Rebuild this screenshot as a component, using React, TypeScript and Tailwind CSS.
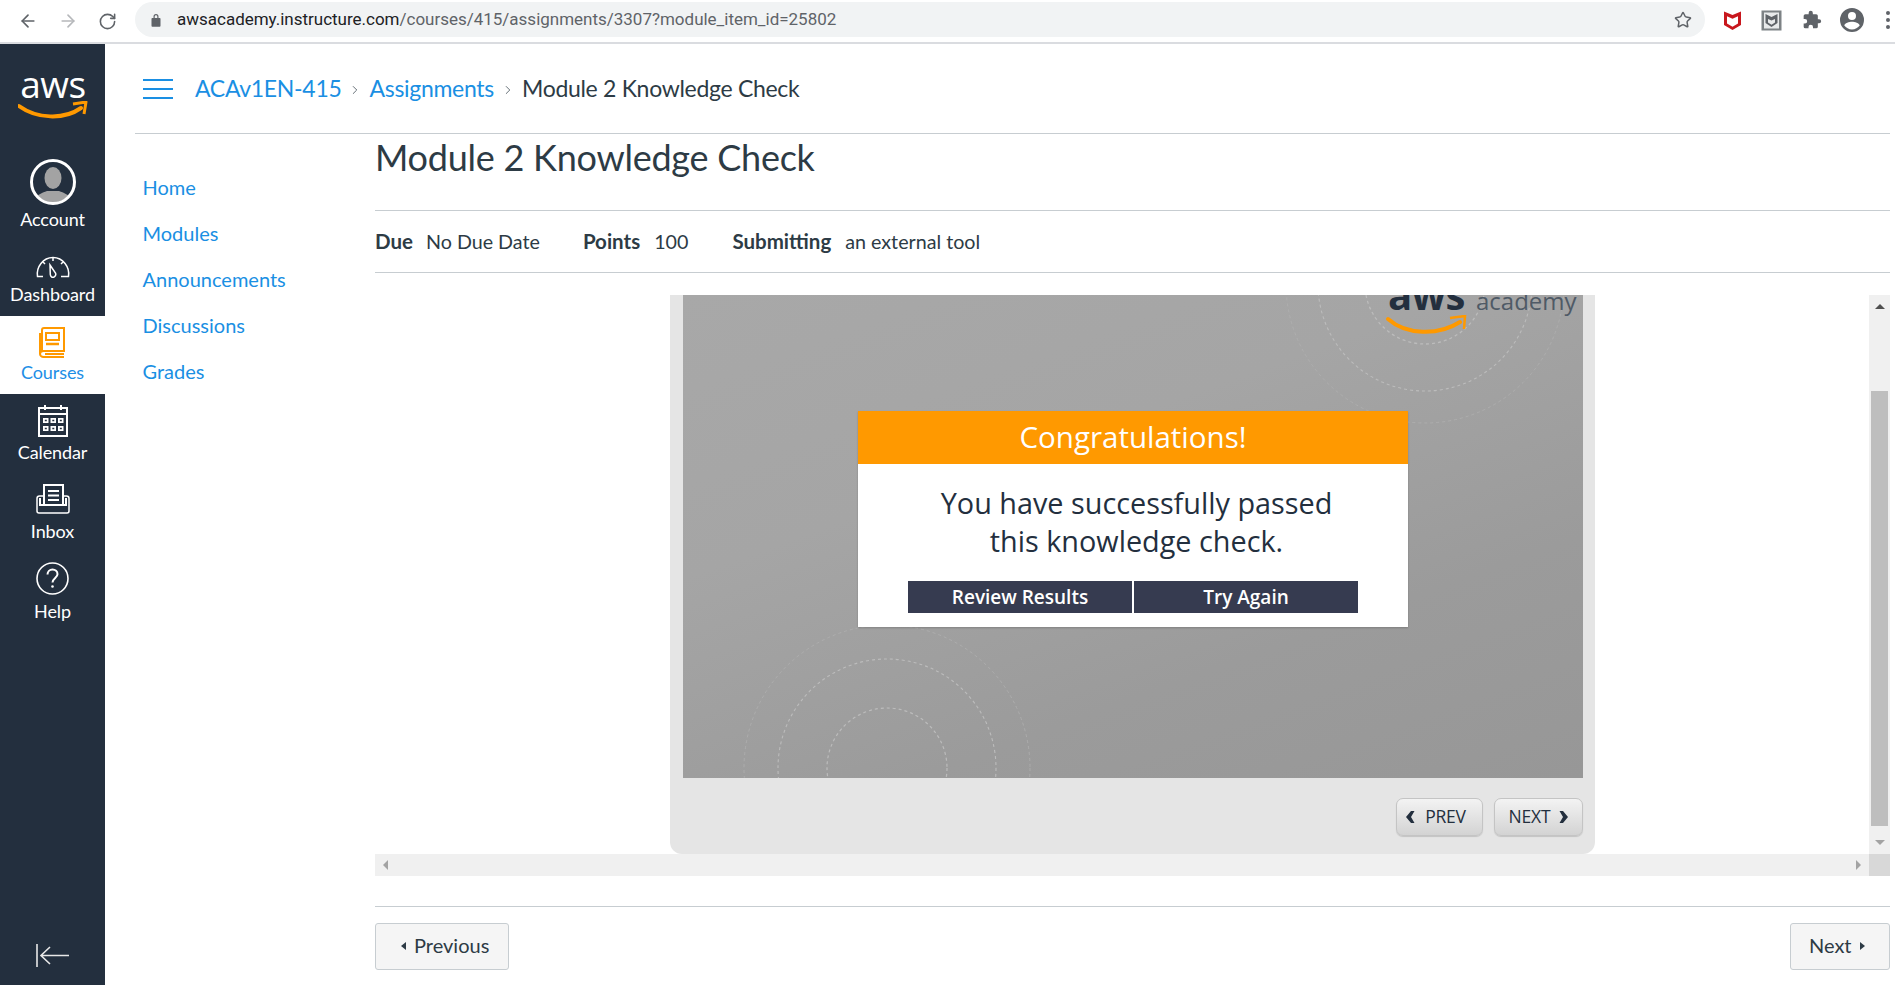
import { ArrowLeft, ArrowRight, RotateCw, Star, ChevronRight } from 'lucide-react'
import type { ReactNode } from 'react'

const courseLinks = ['Home', 'Modules', 'Announcements', 'Discussions', 'Grades']

function ChromeBar() {
  return (
    <div className="flex h-[44px] shrink-0 items-start border-b-2 border-[#dadce0] bg-white pl-[18px] [font-family:Roboto,sans-serif]">
      <div className="flex h-[42px] items-center gap-[20px] text-[#5f6368]">
        <ArrowLeft size={20} strokeWidth={2} />
        <ArrowRight size={20} strokeWidth={2} className="text-[#b6b8bb]" />
        <RotateCw size={19} strokeWidth={2} />
      </div>
      <div className="ml-[18px] mt-[2px] flex h-[35px] w-[1570px] items-center rounded-full bg-[#f1f3f4] pl-[16px] pr-[13px]">
        <svg width="10" height="14" viewBox="0 0 10 14" className="fill-[#5f6368]">
          <path d="M2.5 5V3.6a2.5 2.5 0 0 1 5 0V5h1.2c.5 0 .8.4.8.8v7c0 .6-.3.9-.8.9H1.3c-.5 0-.8-.3-.8-.9v-7c0-.4.3-.8.8-.8zm1.2 0h2.6V3.6a1.3 1.3 0 0 0-2.6 0z" />
        </svg>
        <span className="ml-[16px] text-[17px] tracking-[-0.01px] text-[#202124]">
          awsacademy.instructure.com<span className="text-[#5f6368]">/courses/415/assignments/3307?module_item_id=25802</span>
        </span>
        <Star size={18} strokeWidth={2} className="ml-auto text-[#5f6368]" />
      </div>
      <div className="ml-[19px] flex h-[40px] items-center">
        <svg width="17" height="20" viewBox="0 0 17 20" className="fill-[#c8171d]">
          <path d="M0 1.5 8.5 5 17 1.5V15l-8.5 5L0 15zm3 4.8v7.2l5.5 3.2 5.5-3.2V6.3L8.5 8.7z" />
        </svg>
        <svg width="21" height="21" viewBox="0 0 21 21" className="ml-[20px]">
          <rect x="0.5" y="0.5" width="20" height="20" fill="#7d8285" />
          <rect x="3" y="2.5" width="15" height="16" fill="#e8eaeb" />
          <path d="M4.5 4 10.5 7l6-3v9l-6 4-6-4z" fill="#5f6368" />
          <path d="M7 9l3.5 1.5L14 9v3.5l-3.5 2.3L7 12.5z" fill="#e8eaeb" />
        </svg>
        <svg width="20" height="20" viewBox="0 0 24 24" className="ml-[20px] fill-[#5f6368]">
          <path d="M20.5 11H19V7a2 2 0 0 0-2-2h-4V3.5a2.5 2.5 0 0 0-5 0V5H4a2 2 0 0 0-2 2v3.8h1.5a2.7 2.7 0 0 1 0 5.4H2V20a2 2 0 0 0 2 2h3.8v-1.5a2.7 2.7 0 0 1 5.4 0V22H17a2 2 0 0 0 2-2v-4h1.5a2.5 2.5 0 0 0 0-5z" />
        </svg>
        <svg width="24" height="24" viewBox="0 0 24 24" className="ml-[18px] fill-[#5f6368]">
          <path d="M12 0a12 12 0 1 0 0 24 12 12 0 0 0 0-24zm0 4a4 4 0 1 1 0 8 4 4 0 0 1 0-8zm0 17.5c-3.2 0-6-1.5-7.7-3.9.1-2.5 5.1-3.9 7.7-3.9s7.6 1.4 7.7 3.9c-1.7 2.4-4.5 3.9-7.7 3.9z" />
        </svg>
        <div className="ml-[22px] flex flex-col gap-[3px]">
          <span className="h-[4px] w-[4px] rounded-full bg-[#5f6368]" />
          <span className="h-[4px] w-[4px] rounded-full bg-[#5f6368]" />
          <span className="h-[4px] w-[4px] rounded-full bg-[#5f6368]" />
        </div>
      </div>
    </div>
  )
}

function NavItem({ label, icon, active, className }: { label: string; icon: ReactNode; active?: boolean; className: string }) {
  return (
    <div className={`flex flex-col items-center ${active ? 'bg-white text-[#1d8ee6]' : 'text-white'} ${className}`}>
      {icon}
      <span className="text-[18px] leading-[20px] tracking-[-0.1px]">{label}</span>
    </div>
  )
}

function Sidebar() {
  return (
    <aside className="flex w-[105px] shrink-0 flex-col bg-[#232f3e] [font-family:Lato,sans-serif]">
      <div className="flex h-[106px] flex-col items-center pl-[1px] pt-[21px]">
        <span className="text-[37px] font-medium leading-[38px] tracking-[-0.4px] text-white [font-family:'Open_Sans',sans-serif]">aws</span>
        <svg width="70" height="20" viewBox="0 0 70 20" className="-mt-[2px]">
          <path d="M1 5c18 13 45 14 62 2" fill="none" stroke="#ff9900" strokeWidth="4" strokeLinecap="round" />
          <path d="M55 3l13-2-2 12" fill="none" stroke="#ff9900" strokeWidth="3" strokeLinejoin="round" />
        </svg>
      </div>
      <NavItem
        label="Account"
        className="h-[95px] pt-[9px]"
        icon={
          <svg width="46" height="46" viewBox="0 0 46 46" className="mb-[4px]">
            <defs>
              <clipPath id="avatar-clip"><circle cx="23" cy="23" r="20.5" /></clipPath>
            </defs>
            <g clipPath="url(#avatar-clip)" fill="#a3a3a3">
              <ellipse cx="23" cy="19" rx="8.5" ry="11" />
              <path d="M2 46c0-9 10-12 15-14h12c5 2 15 5 15 14z" />
            </g>
            <circle cx="23" cy="23" r="21.5" fill="none" stroke="#fff" strokeWidth="3" />
          </svg>
        }
      />
      <NavItem
        label="Dashboard"
        className="h-[71px] pt-[11px]"
        icon={
          <svg width="36" height="22" viewBox="0 0 36 22" fill="none" stroke="#fff" strokeWidth="1.5" className="mb-[6px]">
            <path d="M8 20.5H2.5C1 11 8 1.5 18 1.5S35 11 33.5 20.5H26" />
            <path d="M18 2v3M8 6l2 2M28 6l-2 2" />
            <path d="M15 9l5.5 8a3 3 0 0 1-1.5 4c-2 .8-3.5-.5-3.7-2.5z" />
          </svg>
        }
      />
      <NavItem
        label="Courses"
        active
        className="h-[78px] pt-[11px]"
        icon={
          <svg width="27" height="31" viewBox="0 0 27 31" fill="none" stroke="#ff9900" strokeWidth="2" className="mb-[4px]">
            <path d="M3 24V3c0-1 .8-2 2-2h20v23H4.5C2.5 24 1 25.5 1 27s1.5 3 3.5 3H25" />
            <path d="M1 27V6" />
            <rect x="7" y="6" width="13" height="7" />
            <path d="M7 17h13" strokeWidth="2.5" />
            <path d="M6 27h19" />
          </svg>
        }
      />
      <NavItem
        label="Calendar"
        className="h-[78px] pt-[10px]"
        icon={
          <svg width="30" height="33" viewBox="0 0 30 33" fill="none" stroke="#fff" strokeWidth="2" className="mb-[5px]">
            <rect x="1" y="4" width="28" height="28" />
            <path d="M1 10h28M7 1v5M23 1v5" />
            <g fill="#fff" stroke="none">
              <path d="M5 14h5.5v5H5zM12.5 14H18v5h-5.5zM20 14h5.5v5H20zM5 22h5.5v5H5zM12.5 22H18v5h-5.5zM20 22h5.5v5H20z" />
            </g>
            <g fill="#232f3e" stroke="none">
              <path d="M6.8 15.8h2v1.5h-2zM14.3 15.8h2v1.5h-2zM21.8 15.8h2v1.5h-2zM6.8 23.8h2v1.5h-2zM14.3 23.8h2v1.5h-2zM21.8 23.8h2v1.5h-2z" />
            </g>
          </svg>
        }
      />
      <NavItem
        label="Inbox"
        className="h-[79px] pt-[12px]"
        icon={
          <svg width="34" height="30" viewBox="0 0 34 30" fill="none" stroke="#fff" strokeWidth="1.5" className="mb-[7px]">
            <path d="M8 20V1h19v19" strokeWidth="2" />
            <path d="M12 7h11M12 11.5h11M12 16h11" strokeWidth="2" />
            <path d="M8 12H3.5C2 12 1 13 1 14.5V27c0 1 1 2 2 2h28c1 0 2-1 2-2V14.5c0-1.5-1-2.5-2.5-2.5H27" />
            <path d="M4 14v7h26v-7" strokeWidth="2" />
          </svg>
        }
      />
      <NavItem
        label="Help"
        className="h-[79px] pt-[11px]"
        icon={
          <svg width="33" height="33" viewBox="0 0 33 33" fill="none" stroke="#fff" strokeWidth="1.6" className="mb-[6px]">
            <circle cx="16.5" cy="16.5" r="15.5" />
            <path d="M11.5 12.5c0-3 2.2-5 5-5s5 2 5 4.7c0 3.5-5 4-5 8.3" strokeWidth="2" />
            <circle cx="16.5" cy="24.5" r="1.3" fill="#fff" stroke="none" />
          </svg>
        }
      />
      <div className="mt-auto flex justify-center pb-[18px]">
        <svg width="33" height="23" viewBox="0 0 33 23" fill="none" stroke="#e8e8e8" strokeWidth="1.6">
          <path d="M1 0v23M33 11.5H6M14 3l-9 8.5 9 8.5" />
        </svg>
      </div>
    </aside>
  )
}

function Slide() {
  return (
    <div className="relative ml-[13px] flex h-[483px] w-[900px] items-start justify-center overflow-hidden bg-[linear-gradient(160deg,#a8a8a8_0%,#a5a5a5_35%,#9b9b9b_70%,#979797_100%)] pt-[116px]">
      <svg width="900" height="483" viewBox="0 0 900 483" fill="none" stroke="#bcbcbc" strokeDasharray="3 3" className="absolute left-0 top-0">
        <circle cx="742" cy="-11" r="60" strokeWidth="1.3" />
        <circle cx="742" cy="-11" r="107" strokeWidth="1.1" />
        <circle cx="742" cy="-11" r="139" strokeWidth="0.8" stroke="#b0b0b0" />
        <circle cx="204" cy="473" r="60" strokeWidth="1.2" />
        <circle cx="204" cy="473" r="109" strokeWidth="1.1" />
        <circle cx="204" cy="473" r="143" strokeWidth="0.8" stroke="#b0b0b0" />
      </svg>
      <span className="absolute left-[705px] top-[-20px] text-[40px] font-bold leading-[40px] tracking-[-0.5px] text-[#232f3e] [font-family:'Open_Sans',sans-serif]">aws</span>
      <span className="absolute left-[793px] top-[-9px] text-[24px] leading-[30px] text-[#4f5a66] [font-family:'Open_Sans',sans-serif]">academy</span>
      <svg width="84" height="22" viewBox="0 0 84 22" className="absolute left-[703px] top-[20px]">
        <path d="M2 4c18 16 50 17 72 3" fill="none" stroke="#ff9900" strokeWidth="4" strokeLinecap="round" />
        <path d="M64 3l15-2-1 13" fill="none" stroke="#ff9900" strokeWidth="2.5" />
      </svg>
      <div className="relative flex h-[216px] w-[550px] flex-col bg-white shadow-[0_1px_2px_rgba(0,0,0,0.2)] [font-family:'Open_Sans',sans-serif]">
        <div className="flex h-[53px] items-center justify-center bg-[#ff9900] pb-[1px] text-[29.5px] font-medium text-white">Congratulations!</div>
        <p className="mt-[20px] pl-[7px] text-center text-[28.8px] leading-[38px] text-[#232f3e]">
          You have successfully passed
          <br />
          this knowledge check.
        </p>
        <div className="mt-[21px] flex justify-center gap-[2px]">
          <div className="flex h-[32px] w-[224px] items-center justify-center bg-[#363b50] pt-[1px] text-[19px] font-semibold text-white">Review Results</div>
          <div className="flex h-[32px] w-[224px] items-center justify-center bg-[#363b50] pt-[1px] text-[19px] font-semibold text-white">Try Again</div>
        </div>
      </div>
    </div>
  )
}

function SlideButton({ children, className }: { children: ReactNode; className: string }) {
  return (
    <div className={`flex h-[38px] items-center justify-center gap-[9px] rounded-[7px] border border-[#c4c4c4] bg-[linear-gradient(#f3f3f3,#d3d3d3)] pb-[1px] text-[17.5px] tracking-[-0.2px] text-[#232f3e] shadow-[0_1px_1px_rgba(0,0,0,0.15)] [font-family:'Open_Sans',sans-serif] ${className}`}>
      {children}
    </div>
  )
}

function ToolFrame() {
  return (
    <div className="mt-[22px] flex flex-col">
      <div className="flex h-[559px]">
        <div className="flex-1 pl-[295px]">
          <div className="h-[559px] w-[925px] rounded-b-[12px] bg-[#e5e5e5]">
            <Slide />
            <div className="flex justify-end gap-[11px] pr-[12px] pt-[20px]">
              <SlideButton className="w-[87px] pr-[7px]">
                <svg width="9" height="12" viewBox="0 0 9 12" fill="#232f3e" className="mr-[1px]"><path d="M5 0h3.500L5 6l3.500 6H5L0 6z" /></svg>
                PREV
              </SlideButton>
              <SlideButton className="w-[89px]">
                NEXT
                <svg width="9" height="12" viewBox="0 0 9 12" fill="#232f3e"><path d="M4 0H.5L4 6 .5 12H4l5-6z" /></svg>
              </SlideButton>
            </div>
          </div>
        </div>
        <div className="flex w-[21px] flex-col items-center justify-between bg-[#f0f0f0] py-[9px]">
          <div className="h-0 w-0 border-x-[5px] border-b-[5px] border-x-transparent border-b-[#505050]" />
          <div className="-my-[9px] mb-[14px] mt-[82px] w-[17px] flex-1 bg-[#bebebe]" />
          <div className="h-0 w-0 border-x-[5px] border-t-[5px] border-x-transparent border-t-[#a3a3a3]" />
        </div>
      </div>
      <div className="flex h-[22px] bg-[#f0f0f0]">
        <div className="flex flex-1 items-center justify-between px-[8px]">
          <div className="h-0 w-0 border-y-[5px] border-r-[5px] border-y-transparent border-r-[#a3a3a3]" />
          <div className="h-0 w-0 border-y-[5px] border-l-[5px] border-y-transparent border-l-[#a3a3a3]" />
        </div>
        <div className="w-[21px] bg-[#d8d8d8]" />
      </div>
    </div>
  )
}

export default function App() {
  return (
    <div className="flex h-screen w-full flex-col overflow-hidden bg-white text-[#2d3b45] [font-family:Lato,sans-serif]">
      <ChromeBar />
      <div className="flex min-h-0 flex-1">
        <Sidebar />
        <div className="flex min-w-0 flex-1 flex-col pl-[30px] pr-[5px]">
          <header className="flex h-[90px] shrink-0 items-center border-b border-[#c7cdd1]">
            <div className="ml-[8px] flex h-[20px] w-[30px] flex-col justify-between">
              <span className="h-[2px] bg-[#1a8fe3]" />
              <span className="h-[2px] bg-[#1a8fe3]" />
              <span className="h-[2px] bg-[#1a8fe3]" />
            </div>
            <nav className="ml-[22px] flex items-center text-[23px] tracking-[-0.3px]">
              <span className="text-[#1a8fe3]">ACAv1EN-415</span>
              <ChevronRight size={14} strokeWidth={1.25} className="mx-[7px] mt-[3px] text-[#2d3b45]" />
              <span className="text-[#1a8fe3]">Assignments</span>
              <ChevronRight size={14} strokeWidth={1.25} className="mx-[7px] mt-[3px] text-[#2d3b45]" />
              <span>Module 2 Knowledge Check</span>
            </nav>
          </header>
          <div className="flex min-h-0 flex-1">
            <nav className="flex w-[240px] shrink-0 flex-col gap-[23px] pl-[7.5px] pt-[42px] text-[20px] leading-[23px] text-[#1a8fe3]">
              {courseLinks.map(link => (
                <span key={link}>{link}</span>
              ))}
            </nav>
            <main className="flex min-w-0 flex-1 flex-col">
              <h1 className="flex h-[77px] shrink-0 items-start border-b border-[#c7cdd1] text-[36px] font-normal leading-[46px] tracking-[-0.25px]">
                Module 2 Knowledge Check
              </h1>
              <div className="flex h-[62px] shrink-0 items-center border-b border-[#c7cdd1] text-[19.7px]">
                <b className="text-[20.5px] font-bold">Due</b>
                <span className="ml-[13px]">No Due Date</span>
                <b className="ml-[43px] text-[20.5px] font-bold">Points</b>
                <span className="ml-[14px]">100</span>
                <b className="ml-[44px] text-[20.5px] font-bold">Submitting</b>
                <span className="ml-[14px]">an external tool</span>
              </div>
              <ToolFrame />
              <div className="mt-[30px] flex shrink-0 justify-between border-t border-[#c7cdd1] pt-[16px]">
                <div className="flex h-[47px] w-[134px] items-center gap-[8px] rounded-[3px] border border-[#c7cdd1] bg-[#f5f5f5] pb-[3px] pl-[25px] text-[20px]">
                  <span className="mt-[2px] h-0 w-0 border-y-[4px] border-r-[5px] border-y-transparent border-r-[#2d3b45]" />
                  Previous
                </div>
                <div className="flex h-[47px] w-[100px] items-center gap-[8px] rounded-[3px] border border-[#c7cdd1] bg-[#f5f5f5] pb-[3px] pl-[18px] text-[20px]">
                  Next
                  <span className="mt-[2px] h-0 w-0 border-y-[4px] border-l-[5px] border-y-transparent border-l-[#2d3b45]" />
                </div>
              </div>
            </main>
          </div>
        </div>
      </div>
    </div>
  )
}
